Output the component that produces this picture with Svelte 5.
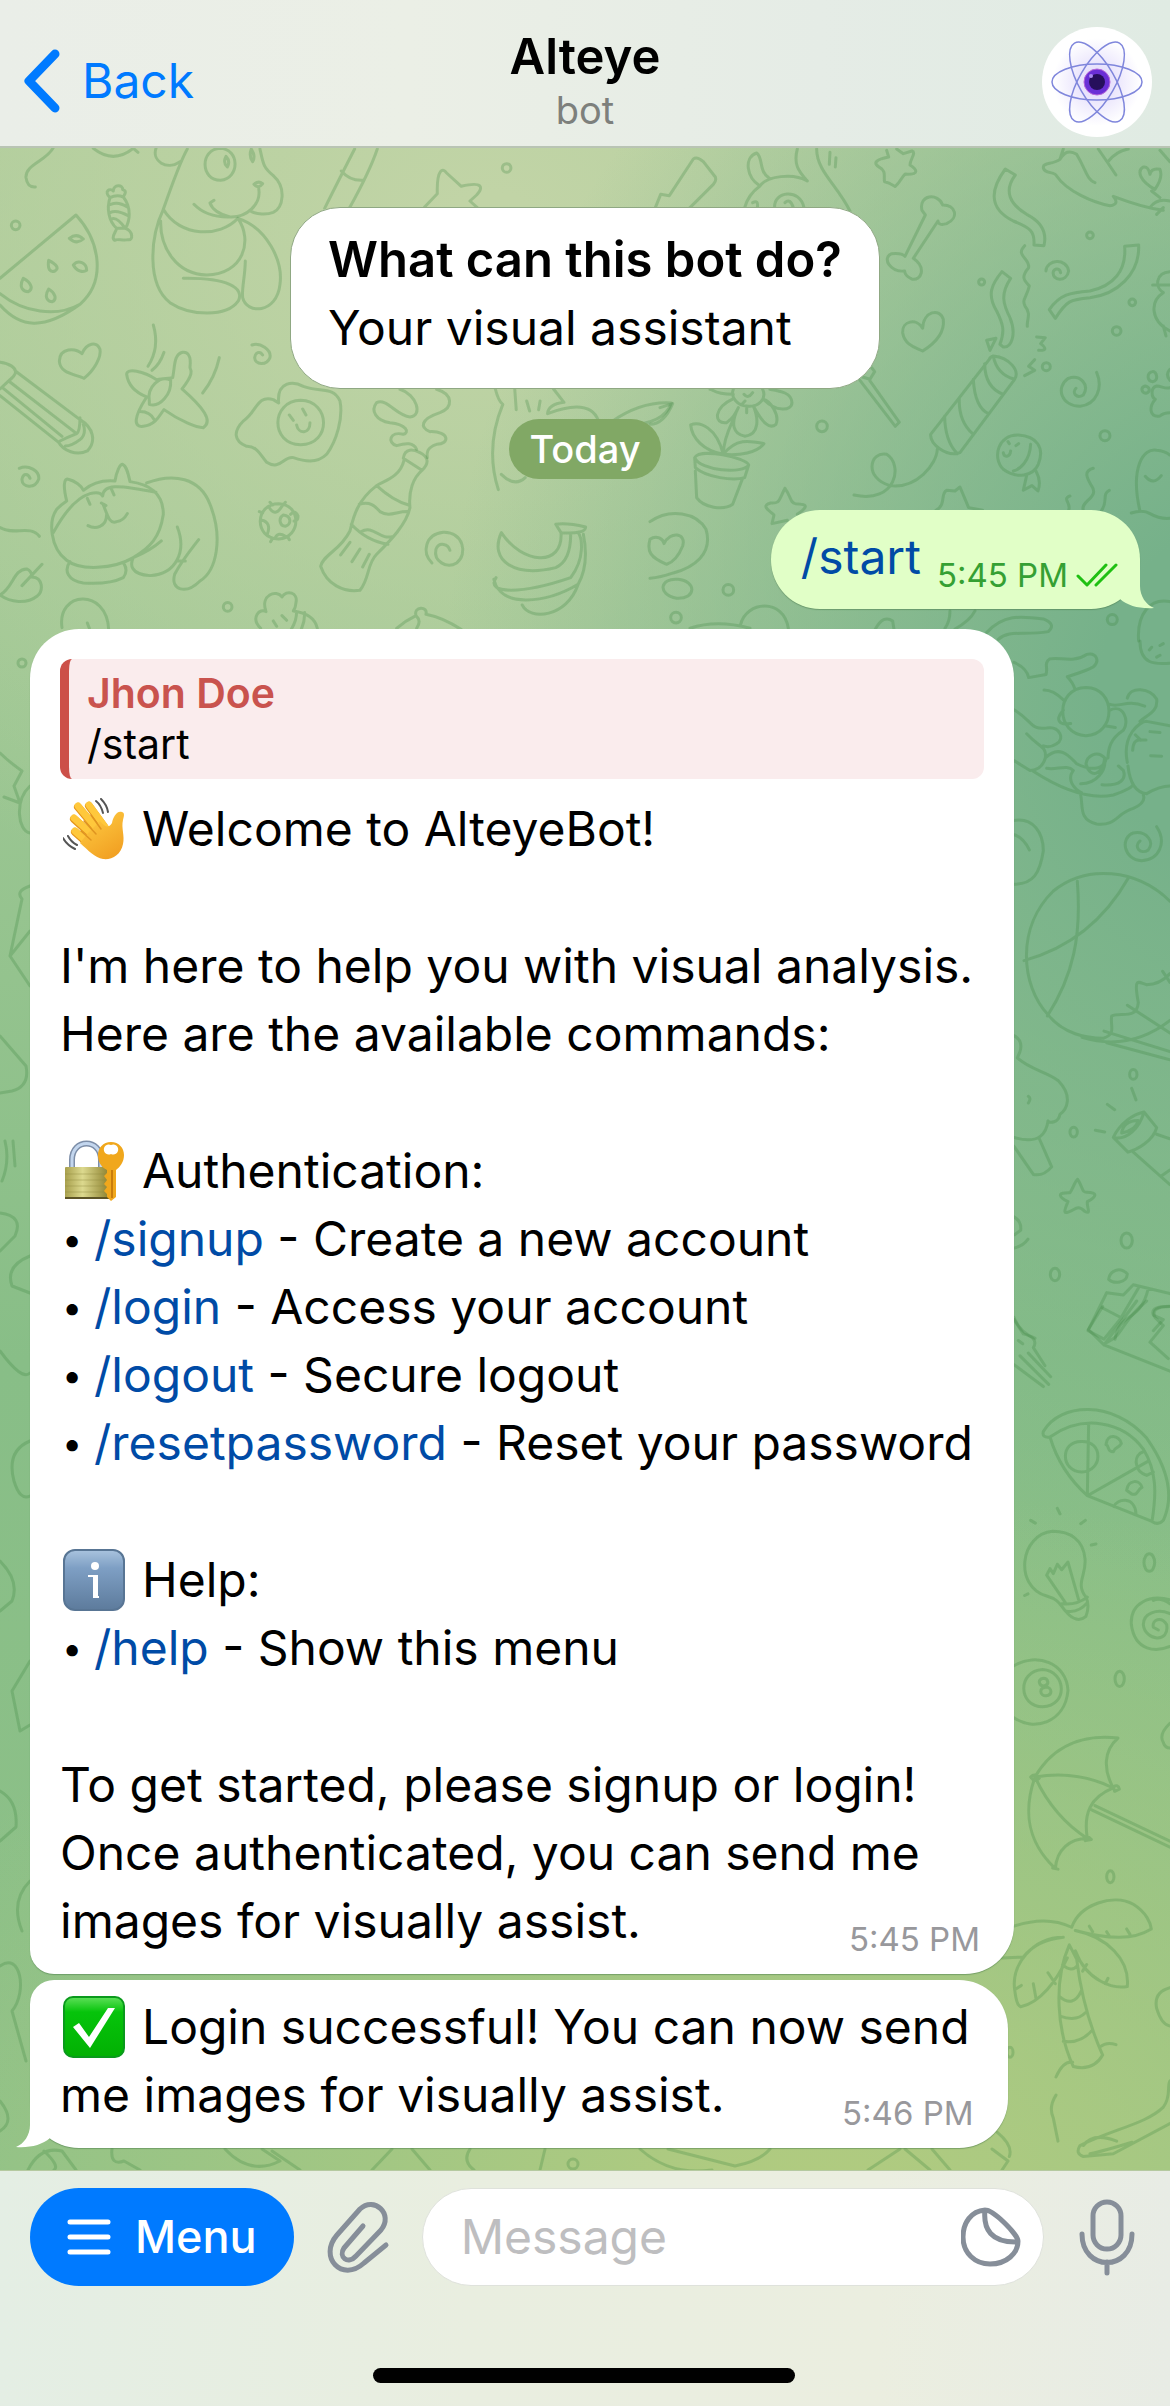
<script>
	const commands = [
		{ name: '/signup', text: 'Create a new account' },
		{ name: '/login', text: 'Access your account' },
		{ name: '/logout', text: 'Secure logout' },
		{ name: '/resetpassword', text: 'Reset your password' }
	]

	let message = $state('')

	// wallpaper line art, grouped by tile so every tile keeps its own scale
	const doodles = [
		{
			transform: 'translate(0 140) scale(.3333)',
			paths: [
				// squiggle, candy, watermelon
				'M160 20C140 60 75 70 78 110Q82 140 106 138M280 22Q340 70 400 22L414 34',
				'M330 170C310 150 330 140 340 150C340 130 370 130 368 146C385 150 370 165 370 168C395 200 390 240 376 262C400 270 400 300 384 296C370 300 350 292 344 298C330 290 350 270 350 262C325 240 320 200 330 170ZM332 190Q355 180 382 198M330 215Q350 205 386 225M334 234Q350 225 376 262M330 170Q350 160 370 168M350 262L376 262',
				'M0 412L228 222C300 300 320 420 240 490C170 530 70 515 0 458M0 492C60 560 130 570 240 490',
				'M208 292Q230 275 250 294Q230 312 208 292ZM146 358C142 385 150 395 165 390C178 382 170 370 146 358ZM220 372C235 355 260 365 260 388C250 395 230 392 220 372ZM70 412C55 440 70 452 85 452C100 445 95 425 70 412ZM146 444C130 470 145 482 157 482C172 475 165 455 146 444Z',
				// panda
				'M540 62C500 90 455 60 468 22M562 24Q540 62 490 205C450 290 440 430 510 485C570 525 680 530 715 480C735 440 680 410 550 412M490 205C540 290 660 290 714 232C760 300 730 400 620 402C530 400 480 320 482 240M714 232C800 260 850 360 840 430C830 520 740 520 728 470C725 440 735 410 736 360',
				'M660 22C600 24 600 118 662 118C720 112 720 24 660 22ZM780 24C790 70 790 80 820 104C860 140 850 200 820 214C800 222 770 220 755 212M762 130Q775 118 788 128Q776 145 762 130ZM776 142C785 190 740 230 690 228Q640 215 630 186L642 178M582 190Q620 230 690 228M678 46Q692 60 682 78Q668 65 678 46ZM754 24Q768 45 758 62Q746 45 754 24Z',
				'M1064 24Q1030 90 974 202M1132 24Q1110 90 1048 202M1024 90Q1050 120 1088 118M1274 198L1312 158C1310 80 1330 80 1340 96L1384 136C1450 120 1450 140 1430 162L1410 180L1432 200',
				// heart, pencil, plane
				'M246 638C225 620 180 620 178 660C180 700 230 700 252 712C280 690 305 650 300 625C290 600 260 605 246 638Z',
				'M0 664C30 668 45 680 46 690L240 836C280 860 290 900 262 930C230 945 190 930 176 904L0 764M26 720Q50 700 46 690M26 720L0 744M26 720L230 878M10 742L186 886M240 830Q240 870 230 878Q200 890 180 900M250 850Q260 880 240 896Q215 915 196 915',
				'M470 716C430 690 380 680 380 700C385 740 420 760 440 768C400 830 400 860 430 856C470 850 480 820 492 806C540 840 590 860 610 860C640 840 610 800 546 744C580 700 575 690 570 680C575 640 560 632 548 634C520 640 525 680 518 710C500 712 480 715 470 716ZM448 780C440 740 480 700 512 718C515 760 480 800 448 790ZM416 812Q450 810 464 838M460 552Q480 620 444 676M492 634Q480 670 456 688M658 650Q645 710 608 756',
				'M756 612C780 604 815 625 810 650C800 675 765 672 764 650C765 635 780 628 788 642M58 982C85 970 120 990 116 1015C105 1045 65 1040 66 1015C70 995 85 998 90 1012',
				// egg
				'M836 786C830 720 880 720 910 736C960 755 1000 735 1020 780C1030 830 1010 900 980 940C950 970 910 960 880 950C850 945 840 990 800 964C780 940 770 915 740 916C700 900 700 870 730 840C770 815 770 760 820 776ZM902 778C812 780 810 910 902 911C995 910 992 780 902 778ZM868 822L880 838M908 804L918 822M890 852C895 880 930 880 930 845',
				// cat and its bed
				'M200 1080C190 1040 190 1010 205 1015C225 1020 245 1035 250 1048Q290 1015 345 1020C350 990 360 970 368 970C380 975 385 1000 390 1022C450 1030 490 1060 490 1120C480 1190 450 1220 400 1250C340 1285 240 1290 200 1258C150 1220 145 1140 170 1105Q185 1090 200 1080ZM160 1175C190 1120 230 1070 270 1058Q300 1050 308 1065C310 1030 350 1030 468 1054M440 1026C520 995 600 1010 630 1090C670 1190 650 1290 600 1320C560 1360 510 1350 524 1300C545 1260 570 1230 596 1196M532 1158C560 1230 530 1300 450 1304C390 1300 390 1270 400 1250Q450 1230 484 1200M210 1262C190 1290 205 1320 250 1326C310 1330 350 1320 370 1310Q385 1290 372 1268M304 1086L318 1094M310 1092C325 1130 330 1150 350 1142Q370 1140 382 1118M320 1120C320 1160 285 1165 264 1154M262 1072L270 1090M334 1044L342 1062M530 1260L556 1260',
				// bug
				'M836 1088C765 1088 760 1192 836 1194C905 1190 905 1090 836 1088ZM808 1100Q825 1130 846 1096M786 1138Q815 1145 802 1180M850 1122C835 1130 838 1155 856 1156C875 1150 875 1125 850 1122ZM826 1190Q835 1172 856 1186M872 1120Q885 1105 894 1125Q895 1140 882 1140M810 1084L818 1092M856 1084L850 1092M778 1112L788 1116M812 1202L818 1192M868 1196L862 1186',
				// bottle and spray
				'M1210 952C1215 920 1240 925 1260 935C1290 950 1285 970 1266 988ZM1212 958C1200 1010 1150 1020 1130 1034C1070 1080 1060 1130 1050 1170C1020 1230 970 1240 962 1276C980 1330 1030 1355 1080 1348C1110 1310 1100 1270 1130 1240C1170 1200 1220 1150 1230 1100C1225 1050 1240 1010 1266 988M1130 1034Q1180 1080 1226 1092M1078 1090C1110 1080 1125 1095 1140 1112C1170 1130 1190 1110 1226 1112M1054 1150Q1100 1200 1164 1210M1084 1172C1120 1150 1140 1200 1180 1186M1050 1204L1022 1242M1080 1224L1056 1262M1108 1240L1088 1278',
				'M1200 745C1250 760 1270 825 1230 828C1190 825 1160 770 1130 785C1110 810 1130 840 1170 845C1220 850 1230 875 1210 880C1170 870 1160 905 1190 914C1220 905 1240 905 1250 925M1310 745C1360 760 1360 800 1320 815C1260 835 1260 860 1290 872C1350 870 1350 910 1310 910C1280 920 1280 935 1282 950',
				'M1296 1266C1265 1235 1275 1180 1330 1174C1390 1172 1405 1240 1370 1266C1340 1285 1300 1260 1308 1225C1318 1200 1345 1210 1350 1228',
				// leaf, ice cream, bear ear and bottom edge bits
				'M0 1160C40 1185 90 1150 118 1186M0 1362C40 1340 40 1285 80 1284Q95 1290 96 1308C130 1310 130 1350 112 1365C80 1390 30 1385 0 1362M66 1334L126 1270M186 1460C170 1350 320 1340 326 1465M262 1446L268 1462M782 1462C750 1430 780 1400 798 1412C780 1360 830 1345 846 1368C860 1345 895 1355 888 1385C885 1410 880 1405 880 1410C920 1415 945 1430 952 1462M846 1424L860 1438M820 1440L830 1456M890 1412Q890 1440 874 1465M914 1415Q915 1440 904 1465M1190 1462Q1215 1440 1248 1424C1240 1395 1285 1395 1278 1420Q1330 1430 1384 1466M1250 1426Q1265 1440 1250 1462'
			],
			dots: [[47, 253, 13], [1520, 81, 13], [683, 1398, 13]]
		},
		{
			transform: 'translate(650 140) scale(.3333)',
			paths: [
				// brush and cow
				'M16 200L32 160L58 164L130 54Q140 45 160 62L196 108Q200 120 190 130L120 200M330 135C290 110 280 50 320 36C340 50 325 90 358 112M330 135C350 105 430 95 472 120M442 24C430 70 445 90 472 120M330 135Q295 160 284 200M500 24C500 90 560 130 600 210M374 200C370 150 450 140 462 200M308 185Q326 175 322 200M405 185Q420 170 430 200M540 34L538 70M558 50L556 78',
				// star, bone, heart
				'M710 28L716 48C680 55 665 65 690 80C710 90 700 110 704 122C725 125 735 140 736 136C755 120 760 95 770 100C810 100 800 85 780 72C780 55 800 35 786 30L760 38L740 24',
				'M816 208C805 160 865 155 878 192C915 190 930 230 890 248Q865 255 864 240L790 352C830 380 815 420 785 414Q765 405 764 390C720 395 695 350 725 338Q755 335 765 346L826 222Z',
				'M818 562C800 530 755 540 758 575C765 615 800 620 818 630C850 610 885 580 880 535C870 500 820 510 818 562Z',
				// streamers
				'M1066 84L1096 102C1060 150 1080 190 1130 220C1180 245 1190 280 1182 314L1152 312C1155 270 1140 260 1090 240C1010 200 1025 140 1066 84ZM1056 392L1082 412C1050 460 1060 490 1080 530C1100 580 1085 620 1060 618L1050 610C1065 570 1060 550 1040 510C1010 460 1025 430 1056 392ZM1424 316L1466 312C1470 400 1400 460 1320 470C1260 475 1250 480 1216 532L1198 506C1230 460 1260 455 1320 450C1390 435 1430 390 1424 316Z',
				'M1124 314C1095 345 1140 350 1136 380C1110 410 1125 420 1138 435C1130 470 1115 475 1125 495C1145 520 1130 535 1132 556M1188 390C1190 355 1250 350 1256 390C1250 425 1205 420 1210 392C1215 380 1230 382 1232 395M1340 694C1360 740 1340 790 1290 796C1235 795 1215 740 1255 712C1290 700 1320 730 1300 762C1280 775 1265 755 1278 742M1010 598L1038 592L1020 628L1010 598M1160 588L1186 590L1172 608Q1200 630 1166 628M1154 656L1136 676L1154 688L1124 704',
				// party popper
				'M1030 645C1080 650 1110 690 1094 715L930 935C890 950 840 910 842 880L1018 655Q1020 648 1030 645ZM1030 645Q1040 700 1094 715M1004 668Q1005 740 1060 760M970 715Q975 800 1016 818M928 770Q925 840 968 878M884 825Q885 900 922 938M862 925C860 970 800 1045 720 1034C640 1010 660 930 710 940C760 970 740 1090 612 1062',
				// flower pot
				'M250 745C240 770 265 795 290 795C330 800 350 770 338 745M250 760C190 760 190 745 180 745M252 772C190 800 190 850 230 845C250 830 255 820 265 800C240 850 250 880 285 886C330 880 325 830 310 795C340 850 360 865 378 850C390 820 360 780 340 775C380 815 425 810 426 785C425 755 390 750 360 745M248 840Q220 900 220 940M220 940C200 860 150 840 122 852C125 890 160 930 220 940C260 890 300 900 342 908C320 935 270 945 220 940M134 950C150 920 290 950 296 972C280 1000 150 990 134 950ZM134 950L136 980C170 1010 250 1020 284 1010L296 972M136 990L140 1070C160 1100 220 1110 248 1090L278 1012M282 760Q294 775 308 755M276 790L285 780M290 800L290 815M30 800L68 788C50 830 30 850 0 850',
				// magic wand, star, chick
				'M630 706L660 715L674 692L665 680M630 718L736 856L748 844L660 720M405 1042C425 1070 420 1085 436 1088C480 1090 470 1100 442 1120M405 1042C385 1080 390 1088 362 1086C330 1095 360 1110 372 1122L366 1148L412 1138M1105 882C1045 880 1025 950 1060 985C1100 1015 1150 1005 1165 970C1185 920 1160 885 1105 882ZM1142 910C1140 960 1110 985 1090 990M1130 1004L1120 1048L1146 1034L1164 1050Q1175 1020 1158 990M1060 935C1062 950 1080 950 1082 930M1074 902L1078 908M1098 914L1106 908',
				// bird and plant
				'M1230 55C1210 70 1180 65 1180 78C1180 100 1215 90 1220 105C1250 150 1330 185 1380 194Q1410 190 1390 166Q1480 200 1540 208M1230 55L1240 24M1230 55Q1250 20 1280 40C1310 90 1310 115 1335 125M1345 24Q1370 60 1398 102M1376 60Q1400 30 1435 24M1530 28L1560 62M1515 145C1470 120 1460 90 1480 78Q1495 75 1500 100Q1505 80 1530 85Q1540 110 1515 145ZM1505 150L1530 170M1500 200Q1520 170 1560 180M1520 220L1540 200',
				'M1560 392C1515 395 1515 440 1540 455C1500 480 1500 540 1560 570M1508 432L1560 432M1540 555L1548 585',
				'M1560 740C1545 745 1535 735 1520 735C1500 740 1505 770 1516 775C1495 800 1500 830 1530 825Q1540 815 1560 815M1508 692C1490 695 1490 720 1508 722C1528 720 1520 690 1508 692ZM1560 685Q1545 700 1560 718M1486 735C1470 740 1475 755 1488 757C1503 752 1500 738 1486 735Z',
				'M1444 1116Q1480 1105 1500 1118Q1530 1135 1560 1132M1470 1110C1440 980 1480 920 1520 928Q1545 930 1560 942M1486 1006Q1510 1035 1534 1004M1330 982C1300 990 1310 1010 1325 1035C1350 1070 1290 1080 1300 1108M1260 1065C1235 1075 1265 1085 1256 1108M1378 1048C1355 1060 1375 1080 1355 1108M858 1108C890 1090 870 1060 890 1048L915 1050L930 1038L956 1100L998 1108',
				// thought bubble, banana, cactus tops
				'M0 1142C60 1100 140 1115 168 1165C190 1240 130 1280 70 1296Q30 1310 0 1312M50 1270C0 1250 -10 1230 0 1195C20 1180 40 1195 42 1208C60 1170 110 1175 98 1215Q80 1260 50 1270ZM84 1315C30 1310 20 1360 80 1372C140 1375 140 1320 84 1315ZM272 1450C290 1380 400 1370 415 1462M120 1462Q200 1435 300 1462M900 1410C900 1440 890 1455 885 1462M975 1410Q960 1440 915 1464M676 1465Q700 1420 728 1440L732 1465M1010 1475C1060 1420 1110 1425 1180 1434Q1220 1450 1195 1472C1120 1485 1080 1465 1045 1495M1466 1500C1460 1420 1500 1370 1560 1382'
			],
			dots: [[995, 423, 9], [1320, 283, 10], [1447, 484, 10], [1400, 570, 13], [1189, 677, 12], [516, 856, 16], [1365, 884, 15], [235, 1347, 16], [78, 1430, 16], [1387, 1436, 15]]
		},
		{
			transform: 'translate(0 380) scale(.746 .3333)',
			paths: [
				// dog, bananas
				'M664 24Q668 60 674 70Q650 200 668 326M690 24L692 86M706 60L710 90M724 60L722 86M742 24L756 64Q735 70 734 98Q790 50 802 118M672 280Q690 320 704 290M820 122Q860 60 900 66Q890 130 840 132M745 430Q760 425 785 438Q785 460 752 455ZM752 455C755 560 700 550 672 455C655 540 690 590 745 560Q765 540 765 460M665 590C650 640 700 640 765 590C785 530 780 470 775 455M662 595C670 680 730 670 775 610Q790 550 782 460M700 672C710 720 760 710 775 610'
			],
			dots: []
		},
		{
			transform: 'translate(980 640) scale(.3333 .4464)',
			paths: [
				// plates and teddy
				'M102 48Q140 60 146 82L198 75C205 60 190 50 210 40C240 35 280 50 320 30C350 25 360 45 340 58C310 70 280 75 262 80Q280 95 284 106M192 110Q220 110 250 132M318 104C225 105 225 210 318 212C410 210 410 105 318 104ZM250 155C225 175 235 190 272 185M390 142C420 150 440 130 494 146M442 128C450 100 510 105 530 130C535 160 500 165 480 180M390 155C430 140 450 180 430 200C390 220 385 240 384 262M375 190L406 194M102 154C160 180 150 200 200 195C240 190 255 220 230 230Q210 240 190 235M140 208C180 240 200 235 196 262Q185 290 150 290L102 268M196 262C240 230 270 260 290 275C330 290 370 290 378 265C350 240 320 260 318 275C330 310 370 300 374 262C380 290 350 320 302 320M160 292Q300 360 400 345C440 335 460 325 458 322M200 285C230 290 260 275 280 290C260 310 280 330 305 340M366 322C420 325 440 310 430 290L415 280M302 345C310 370 295 400 350 410C410 415 410 385 460 375C490 365 495 355 490 345M444 280C450 320 470 340 500 342Q540 325 570 325M442 272C425 210 480 180 500 180L570 190M458 245Q460 220 480 222L498 222M466 210L482 222M510 203L540 205M512 257L545 258',
				'M480 0C480 60 540 50 570 50M508 20L515 14M540 10L550 6M530 36L540 32M102 402C160 395 190 430 190 470C180 520 160 545 102 545M102 434Q130 440 148 468M530 416C560 450 540 490 485 492C430 490 420 440 460 430C500 425 525 450 505 468C480 480 460 460 480 448',
				// beach ball
				'M570 583C470 510 320 500 220 560C110 640 120 770 205 838C250 880 320 890 370 890C410 880 390 865 395 840C420 830 470 850 475 810C460 750 475 765 500 770Q540 770 570 745M292 538C305 660 280 750 202 840M446 530C370 630 260 690 132 716M306 888Q450 920 570 850M372 874L570 920M380 900L570 938M442 816L570 878M548 740L570 765',
				// tree, torch, star, gift
				'M102 884Q130 895 120 920L112 934C150 960 200 965 235 985C280 1020 260 1050 240 1060C235 1080 210 1080 204 1075C200 1100 180 1130 102 1112M102 1132L160 1195Q190 1200 215 1178L178 1115M145 1020Q155 1025 145 1035M400 1112C420 1080 460 1060 492 1055L530 1090C520 1120 470 1140 444 1145ZM400 1112C440 1120 480 1090 492 1055M425 1102Q430 1075 474 1074Q470 1095 425 1102ZM460 1145L570 1218M530 1105L570 1115M545 1198L570 1185M455 1002L468 1028M382 1038L404 1050M346 1096L374 1100',
				'M293 1206C310 1225 305 1235 320 1235C355 1235 350 1245 322 1256C320 1270 335 1285 315 1278C295 1265 290 1270 275 1276C250 1285 250 1280 264 1256C235 1245 230 1235 270 1236C280 1225 285 1210 293 1206ZM102 1290Q125 1300 122 1320L104 1330M102 1360Q130 1355 144 1340M386 1430C390 1410 420 1400 442 1418C440 1440 400 1440 386 1430ZM380 1460L324 1545L372 1564M380 1460L430 1465L460 1442L570 1462M362 1492L424 1516M475 1450L420 1520L372 1564M505 1450C480 1530 420 1500 405 1564M570 1490Q510 1490 520 1510L550 1520L520 1545M102 1515Q120 1550 165 1562'
			],
			dots: [[460, 971, 11], [281, 1100, 11], [440, 1343, 17], [225, 1419, 14]]
		},
		{
			transform: 'translate(980 1300) scale(.3333 .5484)',
			paths: [
				'M325 52L368 10M325 52L372 80L470 0M372 80L570 128M372 78C440 60 410 45 500 0M570 10Q510 10 525 30L550 45L510 75L565 105M102 34L130 60C165 65 170 75 160 85L195 118M102 116L190 156M120 100L206 152M145 95L212 138M115 72L128 78',
				// pizza
				'M190 238C240 185 400 180 500 250C570 310 580 360 550 400Q535 410 516 402L322 355Q240 310 210 248Q185 250 190 238ZM210 248C310 205 430 220 490 270C530 310 530 350 516 402M326 224L322 355L505 292M305 256C240 255 240 310 305 312C370 310 370 255 305 256ZM378 262C380 240 420 245 424 260C415 270 405 265 400 275C380 275 390 265 378 262ZM440 345C445 325 480 325 486 340C470 345 475 355 455 352ZM402 375C410 360 465 355 468 388M490 275C460 280 460 310 500 318L520 312',
				// bulb
				'M218 420C120 425 100 520 200 538C240 545 240 555 256 565Q290 590 318 575Q330 555 318 540C285 515 320 500 315 470C310 435 270 420 218 420ZM256 550L200 500L210 488L220 497L232 480L245 490L264 476L296 545M246 552Q290 555 322 540M256 565Q295 570 322 550M232 378L240 388M152 400L166 405M302 406L316 400M334 445L348 443M134 537L144 534',
				'M570 545C510 535 450 550 454 590C465 640 530 640 570 630M570 552Q540 540 520 546M570 570C530 560 490 570 490 590C495 620 570 625 560 590C545 575 515 580 520 595L535 600',
				// eight ball
				'M102 665C170 640 260 660 264 710C255 770 160 785 102 760M188 672C110 675 115 740 188 740C265 738 260 675 188 672ZM190 688C170 690 178 702 192 702C210 700 205 688 190 688ZM198 704C175 706 180 720 198 720C220 718 215 704 198 704ZM570 770Q535 790 550 805Q555 815 570 815',
				// umbrella
				'M165 868C220 810 310 790 414 797C370 820 370 855 400 888C330 905 310 935 322 980C270 980 230 1000 226 1035C130 980 135 920 165 868ZM165 868Q290 855 400 888M165 868Q220 940 322 980M345 920L570 985M335 928L570 996M152 868Q165 860 178 870Q165 880 152 868ZM400 886Q415 880 418 890L404 894ZM312 978Q325 975 334 982L316 984ZM218 1034L234 1036',
				// palm
				'M275 1142C300 1100 400 1080 460 1100C500 1115 512 1135 514 1145C460 1165 390 1165 286 1148M275 1142Q200 1120 102 1140M250 1160C160 1160 90 1210 105 1260Q110 1285 122 1287C180 1280 230 1240 262 1198M286 1148C380 1160 450 1200 442 1250C400 1255 320 1240 286 1185M66 1198L130 1196Q170 1165 250 1160M268 1174C220 1240 230 1330 280 1396Q340 1405 368 1375C320 1310 300 1250 290 1200ZM248 1210Q275 1225 292 1212M238 1268Q280 1290 304 1258M240 1304Q290 1315 316 1298M250 1350Q300 1355 336 1330M360 1360Q380 1350 408 1356M228 1415Q250 1385 278 1388M328 1140L338 1150M380 1150L388 1158M440 1145L450 1155M106 1255L124 1248M160 1245L168 1272M204 1225L226 1245M376 1245L384 1235M320 1210L308 1222M228 1448Q205 1470 220 1490L234 1532',
				'M570 1252Q520 1260 530 1290Q545 1320 570 1322M570 1422C560 1430 575 1450 550 1470C500 1500 400 1510 300 1540Q285 1555 310 1560L400 1555L570 1500M330 1555Q370 1550 456 1534M310 1540Q340 1515 410 1532M52 1516Q100 1540 88 1560'
			],
			dots: [[508, 477, 16], [419, 689, 14], [391, 1050, 11], [90, 1370, 9]]
		},
		{
			transform: '',
			paths: [
				// left margin
				'M0 752Q8 760 22 770L14 785L20 802L4 796M30 785C14 800 18 830 30 832M30 885Q15 890 22 898L10 955L30 985M10 955L30 930M0 1035L26 1065Q30 1085 12 1090L0 1092M5 1140Q10 1160 2 1180M13 1140L15 1165M0 1212Q24 1215 15 1235L0 1250M30 1255Q5 1265 12 1285L30 1292M0 1350Q22 1380 30 1372M30 1440Q6 1450 14 1480Q20 1500 30 1495M0 1560Q20 1580 12 1600L0 1610M30 1660L12 1690L20 1730L30 1724M0 1790Q18 1800 16 1826L0 1840M30 1880Q10 1900 22 1930M0 1965C20 1950 28 1990 12 2010L26 2060M0 2100Q16 2120 0 2130',
				// bottom margin
				'M28 2169Q40 2145 62 2150L76 2169M44 2150Q60 2165 54 2169M112 2148Q110 2165 124 2160L140 2169M225 2148Q250 2175 280 2160L262 2148M272 2150L300 2169M372 2169L392 2148M412 2148L430 2169M470 2148Q462 2160 474 2169M545 2148L540 2169M640 2148Q670 2175 712 2169M668 2148L735 2165Q760 2160 770 2148M868 2169L900 2148M905 2148L930 2169M932 2148L950 2169M992 2148L1008 2160L1002 2169'
			],
			dots: [[22, 662, 4], [573, 2163, 5]]
		}
	]
</script>

<div class="screen">
	<header>
		<button class="back">
			<svg viewBox="0 0 36 64" width="36" height="64" aria-hidden="true">
				<path d="M31 5 5 32 31 59" fill="none" stroke="currentColor" stroke-width="9" stroke-linecap="round" stroke-linejoin="round" />
			</svg>
			Back
		</button>
		<div class="peer">
			<h1>Alteye</h1>
			<span>bot</span>
		</div>
		<button class="avatar" aria-label="Alteye profile">
			<svg viewBox="0 0 110 110" width="110" height="110" aria-hidden="true">
				<defs>
					<radialGradient id="glow">
						<stop offset=".3" stop-color="#e6e0fc" />
						<stop offset="1" stop-color="#fff" />
					</radialGradient>
				</defs>
				<circle cx="55" cy="55" r="55" fill="#fff" />
				<circle cx="55" cy="55" r="44" fill="url(#glow)" />
				<g fill="none" stroke="#7f86dc" stroke-width="1.5">
					<ellipse cx="55" cy="55" rx="45" ry="18" />
					<ellipse cx="55" cy="55" rx="45" ry="18" transform="rotate(60 55 55)" />
					<ellipse cx="55" cy="55" rx="45" ry="18" transform="rotate(120 55 55)" />
				</g>
				<circle cx="55" cy="55" r="13" fill="#6a2fd6" stroke="#b565d8" />
				<circle cx="55" cy="55" r="8" fill="#260f5c" />
				<circle cx="49" cy="49" r="2" fill="#a98af0" />
			</svg>
		</button>
	</header>

	<main>
		<svg class="wallpaper" viewBox="0 147 1170 2022" preserveAspectRatio="xMidYMin slice" aria-hidden="true">
			{#each doodles as tile}
				<g transform={tile.transform}>
					{#each tile.paths as d}
						<path {d} />
					{/each}
					{#each tile.dots as [cx, cy, r]}
						<circle {cx} {cy} {r} />
					{/each}
				</g>
			{/each}
		</svg>

		<section class="about">
			<h2>What can this bot do?</h2>
			<p>Your visual assistant</p>
		</section>

		<div class="day">Today</div>

		<article class="bubble out">
			<a href="#start">/start</a>
			<span class="meta">
				<time>5:45 PM</time>
				<svg viewBox="0 0 42 24" width="42" height="24" aria-hidden="true">
					<path d="M2 13 11 22 30 2M20 22 40 2" fill="none" stroke="#1fc012" stroke-width="3" stroke-linecap="round" stroke-linejoin="round" />
				</svg>
			</span>
			<svg class="tail" viewBox="0 0 34 50" width="34" height="50" aria-hidden="true">
				<path d="M0 0H20V27C20 37 26 46 34 49C20 50 8 47 0 40Z" fill="#e1ffc7" />
			</svg>
		</article>

		<article class="bubble in first">
			<a class="reply" href="#start">
				<strong>Jhon Doe</strong>
				<span>/start</span>
			</a>
			<p>
				<svg class="emoji" viewBox="0 0 62 62" role="img" aria-label="waving hand">
					<defs>
						<linearGradient id="skin" x1="0" y1="0" x2=".6" y2="1">
							<stop offset="0" stop-color="#ffcf45" />
							<stop offset="1" stop-color="#f2a224" />
						</linearGradient>
					</defs>
					<g stroke="#f9b931" stroke-width="8" stroke-linecap="round" fill="none">
						<path d="M26 8 42 30M15 9 36 34M11 21 32 40M12 34 28 48" stroke="#e5951b" />
						<path d="M26 7 42 29M15 8 36 33M11 20 32 39M12 33 28 47" stroke="#ffc83c" stroke-width="7" />
					</g>
					<path d="M37 23C43 30 46 30 49 25C50 19 54 12 59 14C62 15 61 18 60 22C58 30 62 38 60 46C58 57 49 62 40 61C32 60 25 52 17 45L24 36Z" fill="url(#skin)" />
					<path d="M28 17 38 31M21 23 33 36M18 33 28 42" fill="none" stroke="#df9420" stroke-width="1.5" stroke-linecap="round" />
					<path d="M33 3Q38 7 40 15M38 1Q44 7 45 14M0 40Q4 47 12 51M5 38Q8 44 14 47" fill="none" stroke="#555" stroke-width="2" stroke-linecap="round" />
				</svg>Welcome to AlteyeBot!
			</p>
			<p>
				I'm here to help you with visual analysis.<br />Here are the available commands:
			</p>
			<div>
				<p>
					<svg class="emoji" viewBox="0 0 62 62" role="img" aria-label="lock and key">
						<defs>
							<linearGradient id="brass" x1="0" x2="1">
								<stop offset="0" stop-color="#a8a04d" />
								<stop offset=".4" stop-color="#dcd98e" />
								<stop offset="1" stop-color="#8e8230" />
							</linearGradient>
						</defs>
						<path d="M9 30V20C9 -2 38 -2 38 20V30" fill="none" stroke="#7d8ea8" stroke-width="6" />
						<path d="M9 30V20C9 -2 38 -2 38 20V30" fill="none" stroke="#c3d6ee" stroke-width="3" />
						<rect x="2" y="27" width="44" height="32" rx="1" fill="url(#brass)" />
						<path d="M2 34H42M2 40H42M2 46H42M2 52H42" stroke="#8f8a3c" stroke-opacity=".4" />
						<path d="M2 58H46" stroke="#5d5426" stroke-width="2" />
						<path d="M48 2C56 2 61 8 61 15C61 22 57 27 53 30V57L48 61L44 57V54L41 51L44 47L41 44L44 40L41 36L44 33V30C38 27 35 22 35 15C35 8 40 2 48 2ZM48 5A5 5 0 1 0 48 14A5 5 0 1 0 48 5Z" fill="#f0a71c" fill-rule="evenodd" />
						<path d="M49 30V58" stroke="#c97c0b" stroke-width="2" />
					</svg>Authentication:
				</p>
				<ul>
					{#each commands as command}
						<li><a href="#{command.name.slice(1)}">{command.name}</a> - {command.text}</li>
					{/each}
				</ul>
			</div>
			<div>
				<p>
					<svg class="emoji" viewBox="0 0 62 62" role="img" aria-label="information">
						<defs>
							<linearGradient id="steel" x1="0" y1="0" x2="0" y2="1">
								<stop offset="0" stop-color="#a9c3de" />
								<stop offset=".3" stop-color="#7e9fc4" />
								<stop offset="1" stop-color="#5d7b9c" />
							</linearGradient>
						</defs>
						<rect x="1" y="1" width="60" height="60" rx="11" fill="url(#steel)" stroke="#587594" stroke-width="2" />
						<circle cx="32" cy="17" r="4" fill="#fff" />
						<path d="M25 26H35V47H36V49H30V47H30V28H25Z" fill="#fff" />
					</svg>Help:
				</p>
				<ul>
					<li><a href="#help">/help</a> - Show this menu</li>
				</ul>
			</div>
			<p>
				To get started, please signup or login!<br />Once authenticated, you can send me<br />images for visually assist.
			</p>
			<time>5:45 PM</time>
		</article>

		<article class="bubble in last">
			<p>
				<svg class="emoji" viewBox="0 0 62 62" role="img" aria-label="check mark">
					<defs>
						<linearGradient id="leaf" x1="0" y1="0" x2="0" y2="1">
							<stop offset="0" stop-color="#5fe05a" />
							<stop offset=".25" stop-color="#06c40b" />
							<stop offset="1" stop-color="#02b003" />
						</linearGradient>
					</defs>
					<rect x="1" y="1" width="60" height="60" rx="9" fill="url(#leaf)" stroke="#0a9a1c" stroke-width="2" />
					<path d="M10 31 16 27 26 41 45 12 52 12 27 52Z" fill="#fff" />
				</svg>Login successful! You can now send<br />me images for visually assist.
			</p>
			<time>5:46 PM</time>
			<svg class="tail" viewBox="0 0 34 50" width="34" height="50" aria-hidden="true">
				<path d="M34 0H14V27C14 37 8 46 0 49C14 50 26 47 34 40Z" fill="#fff" />
			</svg>
		</article>
	</main>

	<footer>
		<form onsubmit={(e) => e.preventDefault()}>
			<button type="button" class="menu">
				<svg viewBox="0 0 44 36" width="44" height="36" aria-hidden="true">
					<path d="M3 3H41M3 18H41M3 33H41" stroke="#fff" stroke-width="5" stroke-linecap="round" />
				</svg>
				Menu
			</button>
			<button type="button" class="icon" aria-label="Attach">
				<svg viewBox="0 0 64 74" width="64" height="74" aria-hidden="true">
					<path d="M37 25 18 47C12 56 22 64 30 55L55 29C68 13 48 -5 34 8L11 34C-8 56 16 82 38 62L60 44" transform="translate(0 1)" />
				</svg>
			</button>
			<div class="field">
				<input type="text" aria-label="Message" placeholder="Message" bind:value={message} />
				<button type="button" class="icon" aria-label="Stickers">
					<svg viewBox="0 0 60 60" width="60" height="60" aria-hidden="true">
						<path d="M24 3C10 4 2 16 2 30C2 46 14 57 29 57C46 57 57 46 57 34C57 28 33 3 24 3ZM24 3C22 22 30 36 57 35" />
					</svg>
				</button>
			</div>
			<button type="button" class="icon mic" aria-label="Record voice message">
				<svg viewBox="0 0 60 78" width="60" height="78" aria-hidden="true">
					<rect x="15" y="4" width="28" height="47" rx="14" />
					<path d="M4 36C4 74 54 74 54 36M29 64V75" />
				</svg>
			</button>
		</form>
		<div class="home"></div>
	</footer>
</div>

<style>
	:global(body) {
		margin: 0;
	}
	.screen {
		display: flex;
		flex-direction: column;
		min-height: 100vh;
		font-family: Inter, 'Liberation Sans', sans-serif;
		font-size: 48px;
		line-height: 68px;
		color: #000;
	}
	button {
		padding: 0;
		border: none;
		background: none;
		font: inherit;
		color: inherit;
	}
	h1,
	h2,
	p,
	ul {
		margin: 0;
		padding: 0;
		font-size: inherit;
		font-weight: 400;
	}
	a {
		color: #004ba6;
		text-decoration: none;
	}

	header {
		display: grid;
		grid-template-columns: 1fr auto 1fr;
		align-items: end;
		box-sizing: border-box;
		height: 148px;
		padding: 0 18px 9px;
		border-bottom: 2px solid #b9c4b4;
		background: linear-gradient(90deg, #eaeee8, #ebefe6 35%, #e5ece6 70%, #e0ebe3);
	}
	.back {
		display: flex;
		align-items: center;
		justify-self: start;
		gap: 22px;
		padding: 0 0 22px 6px;
		color: #007aff;
	}
	.peer {
		display: flex;
		flex-direction: column;
		align-items: center;
		padding-bottom: 4px;
	}
	h1,
	h2 {
		font-size: 49px;
		font-weight: 600;
	}
	h1 {
		line-height: 60px;
	}
	.peer span {
		font-size: 38px;
		line-height: 46px;
		color: #7d807c;
	}
	.avatar {
		justify-self: end;
		height: 111px;
	}
	.avatar svg,
	.icon svg {
		display: block;
	}

	main {
		position: relative;
		flex: 1;
		display: flex;
		flex-direction: column;
		align-items: flex-start;
		padding: 59px 30px 22px;
		overflow: hidden;
		background:
			radial-gradient(ellipse 70% 44% at 108% 27%, #76b18a 20%, #76b18a00),
			radial-gradient(ellipse 85% 38% at 70% 104%, #b0cb80 10%, #b0cb8000),
			radial-gradient(ellipse 75% 36% at 42% 4%, #c1d4a6 5%, #c1d4a600),
			linear-gradient(#aacb98, #9bc692 30%, #88be87 60%, #8ec188);
	}
	.wallpaper {
		position: absolute;
		inset: 0;
		width: 100%;
		height: 100%;
		fill: none;
		stroke: #3c8440;
		stroke-width: 3px;
		stroke-opacity: 0.27;
		stroke-linecap: round;
		stroke-linejoin: round;
	}
	.wallpaper path,
	.wallpaper circle {
		vector-effect: non-scaling-stroke;
	}

	.about {
		position: relative;
		align-self: center;
		padding: 18px 37px 26px;
		border: 1px solid #8fa883;
		border-radius: 50px;
		background: #fff;
	}
	.day {
		position: relative;
		align-self: center;
		margin: 30px 0 31px;
		padding: 0 20px;
		border-radius: 30px;
		background: #81a865;
		color: #fff;
		font-size: 38px;
		font-weight: 500;
		line-height: 60px;
	}

	.bubble {
		position: relative;
		box-sizing: border-box;
		border-radius: 49px;
		box-shadow: 0 1px 1px #4a7a4a80;
	}
	.out {
		display: flex;
		align-items: flex-end;
		align-self: flex-end;
		gap: 16px;
		padding: 13px 22px 18px 30px;
		background: #e1ffc7;
	}
	.meta {
		display: flex;
		align-items: center;
		gap: 8px;
		line-height: 42px;
		color: #35a033;
	}
	time {
		font-size: 33px;
	}
	.out .meta {
		margin-bottom: -5px;
	}
	.tail {
		position: absolute;
		bottom: 0;
	}
	.out .tail {
		right: -14px;
	}
	.last .tail {
		left: -14px;
	}

	.in {
		max-width: 984px;
		padding: 13px 20px 19px 30px;
		background: #fff;
	}
	.in time {
		position: absolute;
		right: 34px;
		bottom: 14px;
		line-height: 42px;
		color: #98989c;
	}
	.first {
		display: flex;
		flex-direction: column;
		gap: 69px;
		width: 100%;
		margin: 20px 0 6px;
		padding-top: 30px;
		border-bottom-left-radius: 24px;
	}
	.last {
		padding-right: 38px;
		border-top-left-radius: 24px;
	}
	.reply {
		display: flex;
		flex-direction: column;
		margin: 0 10px -53px 0;
		padding: 9px 18px;
		border-left: 9px solid #cc5049;
		border-radius: 12px;
		background: #faeced;
		color: #000;
		font-size: 41px;
		line-height: 51px;
	}
	.reply strong {
		font-weight: 600;
		color: #c9534e;
	}
	ul {
		list-style: none;
	}
	li::before {
		content: '•';
		display: inline-block;
		box-sizing: border-box;
		width: 34px;
		padding-left: 2px;
		font-size: 36px;
		line-height: 36px;
		vertical-align: 4px;
	}
	.emoji {
		width: 62px;
		height: 62px;
		margin: 0 17px 0 3px;
		vertical-align: -14px;
	}

	footer {
		display: flex;
		flex-direction: column;
		align-items: center;
		gap: 82px;
		padding: 17px 32px 24px 30px;
		border-top: 1px solid #b5c9a0;
		background: linear-gradient(90deg, #e4eee4, #e9eee0 40%, #ebeee0 75%, #e8ece5);
	}
	form {
		display: flex;
		align-items: center;
		width: 100%;
	}
	.menu {
		display: flex;
		align-items: center;
		gap: 24px;
		height: 98px;
		padding: 0 37px;
		border-radius: 49px;
		background: #007aff;
		color: #fff;
		font-size: 45px;
		font-weight: 500;
	}
	.icon {
		margin: 0 32px;
	}
	.icon svg {
		fill: none;
		stroke: #868e99;
		stroke-width: 5;
		stroke-linecap: round;
		stroke-linejoin: round;
	}
	.field {
		display: flex;
		align-items: center;
		flex: 1;
		box-sizing: border-box;
		height: 98px;
		min-width: 0;
		border: 1px solid #dfe2dc;
		border-radius: 49px;
		background: #fff;
	}
	.field input {
		flex: 1;
		min-width: 0;
		padding: 0 0 0 38px;
		border: none;
		outline: none;
		background: none;
		font: inherit;
		color: #000;
	}
	.field input::placeholder {
		color: #bebec0;
		opacity: 1;
	}
	.field .icon {
		margin: 0 22px;
	}
	.icon.mic {
		margin: 0 0 0 34px;
	}
	.home {
		width: 38%;
		height: 15px;
		border-radius: 8px;
		background: #000;
	}
</style>
